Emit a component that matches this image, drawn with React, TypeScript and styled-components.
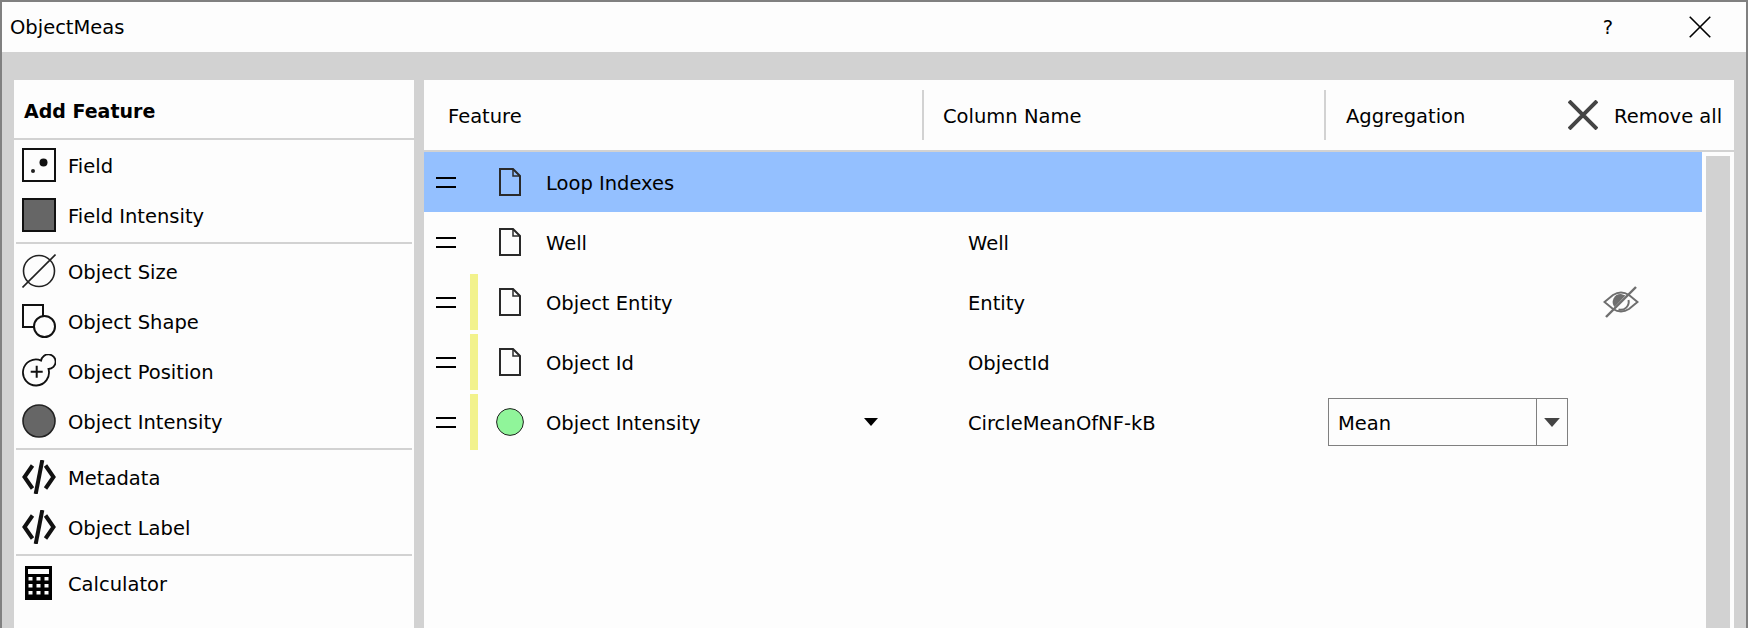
import React from "react";
import styled, { createGlobalStyle } from "styled-components";

const Global = createGlobalStyle`
  html, body {
    margin: 0;
    padding: 0;
    background: #d2d2d2;
    overflow: hidden;
  }
  * {
    box-sizing: border-box;
  }
`;

const Window = styled.div`
  width: 1748px;
  height: 628px;
  display: flex;
  flex-direction: column;
  overflow: hidden;
  background: #d2d2d2;
  border: 2px solid #808080;
  border-bottom: none;
  color: #000;
  font-family: "DejaVu Sans", "Noto Sans", sans-serif;
  font-size: 19.5px;
`;

const Label = styled.span`
  padding-top: 2px;
`;

const TitleBar = styled.div`
  flex: 0 0 50px;
  display: flex;
  align-items: center;
  padding-left: 8px;
  background: #fdfdfd;
`;

const Title = styled.span`
  flex: 1;
`;

const HelpMark = styled.span`
  width: 20px;
  margin-right: 71px;
  text-align: center;
`;

const CloseButton = styled.span`
  display: flex;
  margin-right: 35px;
`;

const Body = styled.div`
  flex: 1;
  display: flex;
  gap: 10px;
  padding: 28px 12px 0;
  min-height: 0;
`;

const Sidebar = styled.div`
  flex: 0 0 400px;
  background: #fdfdfd;
`;

const SidebarHeading = styled.div`
  height: 58px;
  padding: 4px 0 0 10px;
  display: flex;
  align-items: center;
  font-size: 19px;
  font-weight: 700;
`;

const HeadingRule = styled.div`
  height: 2px;
  background: #d2d2d2;
`;

const Separator = styled.div`
  height: 2px;
  margin: 2px 2px;
  background: #d2d2d2;
`;

const Tool = styled.div`
  height: 50px;
  display: flex;
  align-items: center;
  gap: 12px;
  padding-left: 8px;
`;

const ToolIcon = styled.svg`
  width: 34px;
  height: 34px;
  flex: none;
`;

const Main = styled.div`
  flex: 1;
  display: flex;
  flex-direction: column;
  background: #fdfdfd;
  min-width: 0;
`;

const TableHeader = styled.div`
  flex: 0 0 72px;
  display: flex;
  align-items: center;
  border-bottom: 2px solid #d2d2d2;
`;

const HeaderCell = styled.div<{ $width: number; $pad: number; $rule?: boolean }>`
  width: ${(p) => p.$width}px;
  height: 50px;
  display: flex;
  align-items: center;
  padding-left: ${(p) => p.$pad}px;
  border-left: ${(p) => (p.$rule ? "2px solid #d2d2d2" : "none")};
`;

const RemoveAll = styled.div`
  display: flex;
  align-items: center;
  gap: 16px;
`;

const TableBody = styled.div`
  flex: 1;
  display: flex;
  min-height: 0;
`;

const Rows = styled.div`
  flex: 0 0 1278px;
`;

const Row = styled.div<{ $selected?: boolean }>`
  height: 60px;
  display: grid;
  grid-template-columns: 46px 8px 68px 422px 360px 240px 1fr;
  align-items: center;
  background: ${(p) => (p.$selected ? "#94c0ff" : "transparent")};
`;

const Handle = styled.div`
  width: 20px;
  height: 11px;
  margin-left: 12px;
  border-top: 2px solid #000;
  border-bottom: 2px solid #000;
`;

const ScopeBar = styled.div<{ $on?: boolean }>`
  height: 56px;
  background: ${(p) => (p.$on ? "#f2f28c" : "transparent")};
`;

const TypeCell = styled.div`
  width: 64px;
  display: flex;
  justify-content: center;
`;

const NameCell = styled.div`
  display: flex;
  align-items: center;
  justify-content: space-between;
  padding-right: 90px;
`;

const ColumnCell = styled.div`
  display: flex;
  align-items: center;
`;

const EyeCell = styled.div`
  display: flex;
  padding-left: 35px;
`;

const Combo = styled.div`
  width: 240px;
  height: 48px;
  display: flex;
  border: 1px solid #808080;
`;

const ComboValue = styled.div`
  flex: 1;
  display: flex;
  align-items: center;
  padding-left: 9px;
`;

const ComboButton = styled.div`
  flex: 0 0 31px;
  display: flex;
  align-items: center;
  justify-content: center;
  border-left: 1px solid #808080;
`;

const Scrollbar = styled.div`
  flex: 0 0 24px;
  margin: 4px 0 0 4px;
  background: #d2d2d2;
`;

const Triangle = ({ w, color }: { w: number; color: string }) => (
  <svg width={w} height={w / 2 + 1} viewBox="0 0 14 8">
    <path d="M0 0H14L7 8Z" fill={color} />
  </svg>
);

const FileIcon = () => (
  <svg width="22" height="28" viewBox="0 0 22 28" fill="none" stroke="#2a2a2a" strokeWidth="2">
    <path d="M1 1H14L21 8V27H1Z" />
    <path d="M14 1V8H21" strokeWidth="1.5" />
  </svg>
);

const CodeIcon = () => (
  <ToolIcon viewBox="0 0 34 34" fill="none" stroke="#111" strokeWidth="4">
    <path d="M10.5 5.5L2.5 17L10.5 28.5" />
    <path d="M23.5 5.5L31.5 17L23.5 28.5" />
    <path d="M20.3 0L13.7 34" />
  </ToolIcon>
);

const tools: { name: string; icon: React.ReactNode }[][] = [
  [
    {
      name: "Field",
      icon: (
        <ToolIcon viewBox="0 0 34 34">
          <rect x="1" y="1" width="32" height="32" fill="none" stroke="#111" strokeWidth="2" />
          <circle cx="21.5" cy="14.5" r="4" fill="#111" />
          <circle cx="11" cy="23" r="2" fill="#222" />
        </ToolIcon>
      ),
    },
    {
      name: "Field Intensity",
      icon: (
        <ToolIcon viewBox="0 0 34 34">
          <rect x="1" y="1" width="32" height="32" fill="#666" stroke="#111" strokeWidth="2" />
        </ToolIcon>
      ),
    },
  ],
  [
    {
      name: "Object Size",
      icon: (
        <ToolIcon viewBox="0 0 34 34" fill="none" stroke="#222" strokeWidth="1.6">
          <circle cx="17" cy="17" r="15.5" />
          <path d="M0.5 33.5L33.5 0.5" />
        </ToolIcon>
      ),
    },
    {
      name: "Object Shape",
      icon: (
        <ToolIcon viewBox="0 0 34 34" fill="none" stroke="#111" strokeWidth="2">
          <path d="M13 23H1V1H21V12.5" />
          <circle cx="22.5" cy="22.5" r="10.5" />
        </ToolIcon>
      ),
    },
    {
      name: "Object Position",
      icon: (
        <ToolIcon viewBox="0 0 34 34" fill="none" stroke="#111" strokeWidth="1.8">
          <path d="M19.09 6.55A7.3 7.3 0 1 1 26.5 15A13 13 0 1 1 19.09 6.55Z" />
          <path d="M8.7 17.7H20.7M14.7 11.7V23.7" strokeWidth="2" />
        </ToolIcon>
      ),
    },
    {
      name: "Object Intensity",
      icon: (
        <ToolIcon viewBox="0 0 34 34">
          <circle cx="17" cy="17" r="16" fill="#666" stroke="#222" strokeWidth="1.6" />
        </ToolIcon>
      ),
    },
  ],
  [
    { name: "Metadata", icon: <CodeIcon /> },
    { name: "Object Label", icon: <CodeIcon /> },
  ],
  [
    {
      name: "Calculator",
      icon: (
        <ToolIcon viewBox="0 0 34 34">
          <path
            fillRule="evenodd"
            fill="#000"
            d="M3 0H30V34H3ZM6 3V8H27V3ZM6.5 11V14.5H10.5V11ZM14.5 11V14.5H18.5V11ZM22.5 11V14.5H26.5V11ZM6.5 18V21.5H10.5V18ZM14.5 18V21.5H18.5V18ZM22.5 18V21.5H26.5V18ZM6.5 25V28.5H10.5V25ZM14.5 25V28.5H18.5V25ZM22.5 25V28.5H26.5V25Z"
          />
        </ToolIcon>
      ),
    },
  ],
];

const CrossIcon = ({ size, color, weight }: { size: number; color: string; weight: number }) => (
  <svg width={size} height={size} viewBox="0 0 30 30" fill="none" stroke={color} strokeWidth={weight}>
    <path d="M1 1L29 29M29 1L1 29" />
  </svg>
);

const EyeOff = () => (
  <svg width="36" height="32" viewBox="0 0 36 32" fill="none" stroke="#6e6e6e">
    <path d="M1.5 16L10 9C15 6 21 6 26 9L34.5 16L26 23C21 26 15 26 10 23Z" strokeWidth="2" />
    <path d="M18 8A8 8 0 0 0 11.5 21L22.5 9.5Z" fill="#6e6e6e" stroke="none" />
    <path d="M25.5 14A8 8 0 0 1 15.5 23.5" strokeWidth="2" />
    <path d="M3 31L33 1" strokeWidth="2.4" />
  </svg>
);

export default function App() {
  return (
    <>
      <Global />
      <Window>
        <TitleBar>
          <Title>ObjectMeas</Title>
          <HelpMark>?</HelpMark>
          <CloseButton>
            <CrossIcon size={22} color="#000" weight={2.2} />
          </CloseButton>
        </TitleBar>
        <Body>
          <Sidebar>
            <SidebarHeading>Add Feature</SidebarHeading>
            <HeadingRule />
            {tools.map((group, i) => (
              <React.Fragment key={i}>
                {i > 0 && <Separator />}
                {group.map((tool) => (
                  <Tool key={tool.name}>
                    {tool.icon}
                    <Label>{tool.name}</Label>
                  </Tool>
                ))}
              </React.Fragment>
            ))}
          </Sidebar>
          <Main>
            <TableHeader>
              <HeaderCell $width={498} $pad={24}><Label>Feature</Label></HeaderCell>
              <HeaderCell $width={402} $pad={19} $rule><Label>Column Name</Label></HeaderCell>
              <HeaderCell $width={244} $pad={20} $rule><Label>Aggregation</Label></HeaderCell>
              <RemoveAll>
                <CrossIcon size={30} color="#444" weight={4} />
                <Label>Remove all</Label>
              </RemoveAll>
            </TableHeader>
            <TableBody>
              <Rows>
                <Row $selected>
                  <Handle />
                  <ScopeBar />
                  <TypeCell><FileIcon /></TypeCell>
                  <NameCell><Label>Loop Indexes</Label></NameCell>
                </Row>
                <Row>
                  <Handle />
                  <ScopeBar />
                  <TypeCell><FileIcon /></TypeCell>
                  <NameCell><Label>Well</Label></NameCell>
                  <ColumnCell><Label>Well</Label></ColumnCell>
                </Row>
                <Row>
                  <Handle />
                  <ScopeBar $on />
                  <TypeCell><FileIcon /></TypeCell>
                  <NameCell><Label>Object Entity</Label></NameCell>
                  <ColumnCell><Label>Entity</Label></ColumnCell>
                  <div />
                  <EyeCell><EyeOff /></EyeCell>
                </Row>
                <Row>
                  <Handle />
                  <ScopeBar $on />
                  <TypeCell><FileIcon /></TypeCell>
                  <NameCell><Label>Object Id</Label></NameCell>
                  <ColumnCell><Label>ObjectId</Label></ColumnCell>
                </Row>
                <Row>
                  <Handle />
                  <ScopeBar $on />
                  <TypeCell>
                    <svg width="28" height="28" viewBox="0 0 28 28">
                      <circle cx="14" cy="14" r="13.4" fill="#90f59a" stroke="#222" strokeWidth="1" />
                    </svg>
                  </TypeCell>
                  <NameCell>
                    <Label>Object Intensity</Label>
                    <Triangle w={14} color="#000" />
                  </NameCell>
                  <ColumnCell><Label>CircleMeanOfNF-kB</Label></ColumnCell>
                  <Combo>
                    <ComboValue><Label>Mean</Label></ComboValue>
                    <ComboButton><Triangle w={16} color="#444" /></ComboButton>
                  </Combo>
                </Row>
              </Rows>
              <Scrollbar />
            </TableBody>
          </Main>
        </Body>
      </Window>
    </>
  );
}
